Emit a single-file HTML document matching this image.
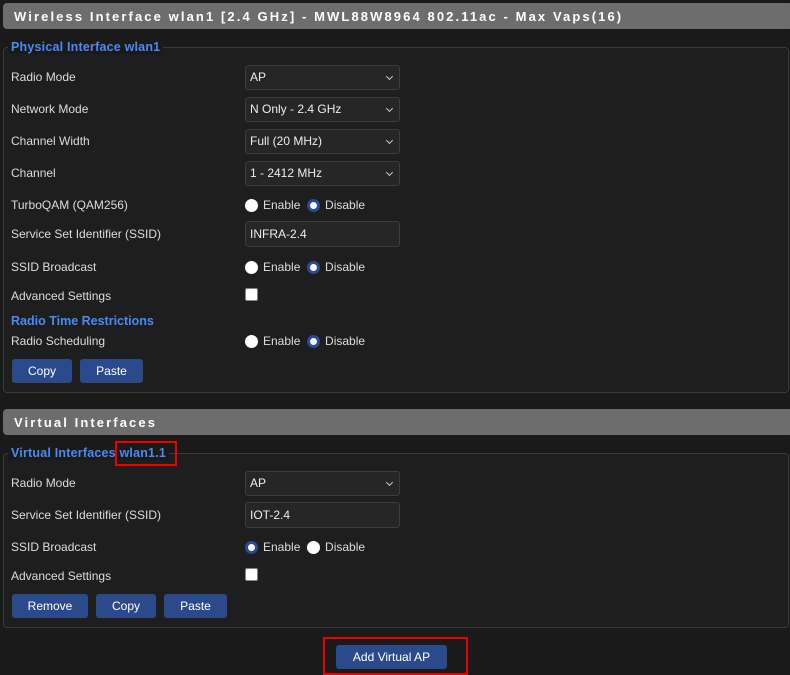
<!DOCTYPE html><html><head><style>
body{margin:0;width:790px;height:673px;background:#1a1a1a;font-family:"Liberation Sans",sans-serif;position:relative;overflow:hidden;color:#ddd}
.hdr{position:absolute;left:3px;width:790px;height:26px;background:#6d6d6d;border-radius:4px;color:#fff;font-weight:bold;font-size:13px;letter-spacing:2.1px;line-height:27px;text-indent:11px;white-space:nowrap}
.fs{position:absolute;left:3px;width:784px;border:1px solid #3a3a3a;border-radius:4px;background:#1e1e1e}
.lg{position:absolute;left:8px;background:#1a1a1a;color:#4a8af4;font-weight:bold;font-size:12.5px;padding:0 3px;line-height:14px;letter-spacing:0.2px}
.lb{position:absolute;left:11px;font-size:12px;line-height:14px}
.sel{position:absolute;left:245px;width:153px;height:23px;background:#262626;border:1px solid #3c3c3c;border-radius:3px;font-size:12px;line-height:23px;text-indent:4px;color:#eee}
.dd:after{content:"";position:absolute;right:7px;top:8px;width:4px;height:4px;border-right:1.3px solid #ccc;border-bottom:1.3px solid #ccc;transform:rotate(45deg)}
.r{position:absolute;font-size:12px;line-height:14px}
.rb{display:inline-block;width:13px;height:13px;border-radius:50%;background:#fff;vertical-align:-3px;margin-right:5px;box-sizing:border-box}
.on{border:3.5px solid #2a4b8f;background:#fff}
.btn{position:absolute;height:24px;background:#2b4a8c;border-radius:3px;color:#fff;font-size:12px;line-height:24px;text-align:center}
.cb{position:absolute;left:245px;width:13px;height:13px;background:#fff;border:1px solid #888;border-radius:2px;box-sizing:border-box}
.red{position:absolute;border:2px solid #e00;box-sizing:border-box}
</style></head><body>
<div class="hdr" style="top:3px">Wireless Interface wlan1 [2.4 GHz] - MWL88W8964 802.11ac - Max Vaps(16)</div>
<div class="fs" style="top:47px;height:344px"></div>
<div class="lg" style="top:40px">Physical Interface wlan1</div>
<div class="lb" style="top:70px">Radio Mode</div><div class="sel dd" style="top:65px">AP</div>
<div class="lb" style="top:102px">Network Mode</div><div class="sel dd" style="top:97px">N Only - 2.4 GHz</div>
<div class="lb" style="top:134px">Channel Width</div><div class="sel dd" style="top:129px">Full (20 MHz)</div>
<div class="lb" style="top:166px">Channel</div><div class="sel dd" style="top:161px">1 - 2412 MHz</div>
<div class="lb" style="top:198px">TurboQAM (QAM256)</div>
<div class="r" style="left:245px;top:198px"><span class="rb"></span>Enable &nbsp;<span class="rb on"></span>Disable</div>
<div class="lb" style="top:227px">Service Set Identifier (SSID)</div><div class="sel" style="top:221px;height:24px;line-height:25px">INFRA-2.4</div>
<div class="lb" style="top:260px">SSID Broadcast</div>
<div class="r" style="left:245px;top:260px"><span class="rb"></span>Enable &nbsp;<span class="rb on"></span>Disable</div>
<div class="lb" style="top:289px">Advanced Settings</div><div class="cb" style="top:288px"></div>
<div class="lb" style="top:314px;color:#4a8af4;font-weight:bold;font-size:12.5px">Radio Time Restrictions</div>
<div class="lb" style="top:334px">Radio Scheduling</div>
<div class="r" style="left:245px;top:334px"><span class="rb"></span>Enable &nbsp;<span class="rb on"></span>Disable</div>
<div class="btn" style="left:12px;top:359px;width:60px">Copy</div>
<div class="btn" style="left:80px;top:359px;width:63px">Paste</div>

<div class="hdr" style="top:409px">Virtual Interfaces</div>
<div class="fs" style="top:453px;height:173px"></div>
<div class="lg" style="top:446px">Virtual Interfaces wlan1.1</div>
<div class="red" style="left:115px;top:441px;width:62px;height:25px"></div>
<div class="lb" style="top:476px">Radio Mode</div><div class="sel dd" style="top:471px">AP</div>
<div class="lb" style="top:508px">Service Set Identifier (SSID)</div><div class="sel" style="top:502px;height:24px;line-height:25px">IOT-2.4</div>
<div class="lb" style="top:540px">SSID Broadcast</div>
<div class="r" style="left:245px;top:540px"><span class="rb on"></span>Enable &nbsp;<span class="rb"></span>Disable</div>
<div class="lb" style="top:569px">Advanced Settings</div><div class="cb" style="top:568px"></div>
<div class="btn" style="left:12px;top:594px;width:76px">Remove</div>
<div class="btn" style="left:96px;top:594px;width:60px">Copy</div>
<div class="btn" style="left:164px;top:594px;width:63px">Paste</div>
<div class="btn" style="left:336px;top:645px;width:111px">Add Virtual AP</div>
<div class="red" style="left:323px;top:637px;width:145px;height:38px"></div>
</body></html>
